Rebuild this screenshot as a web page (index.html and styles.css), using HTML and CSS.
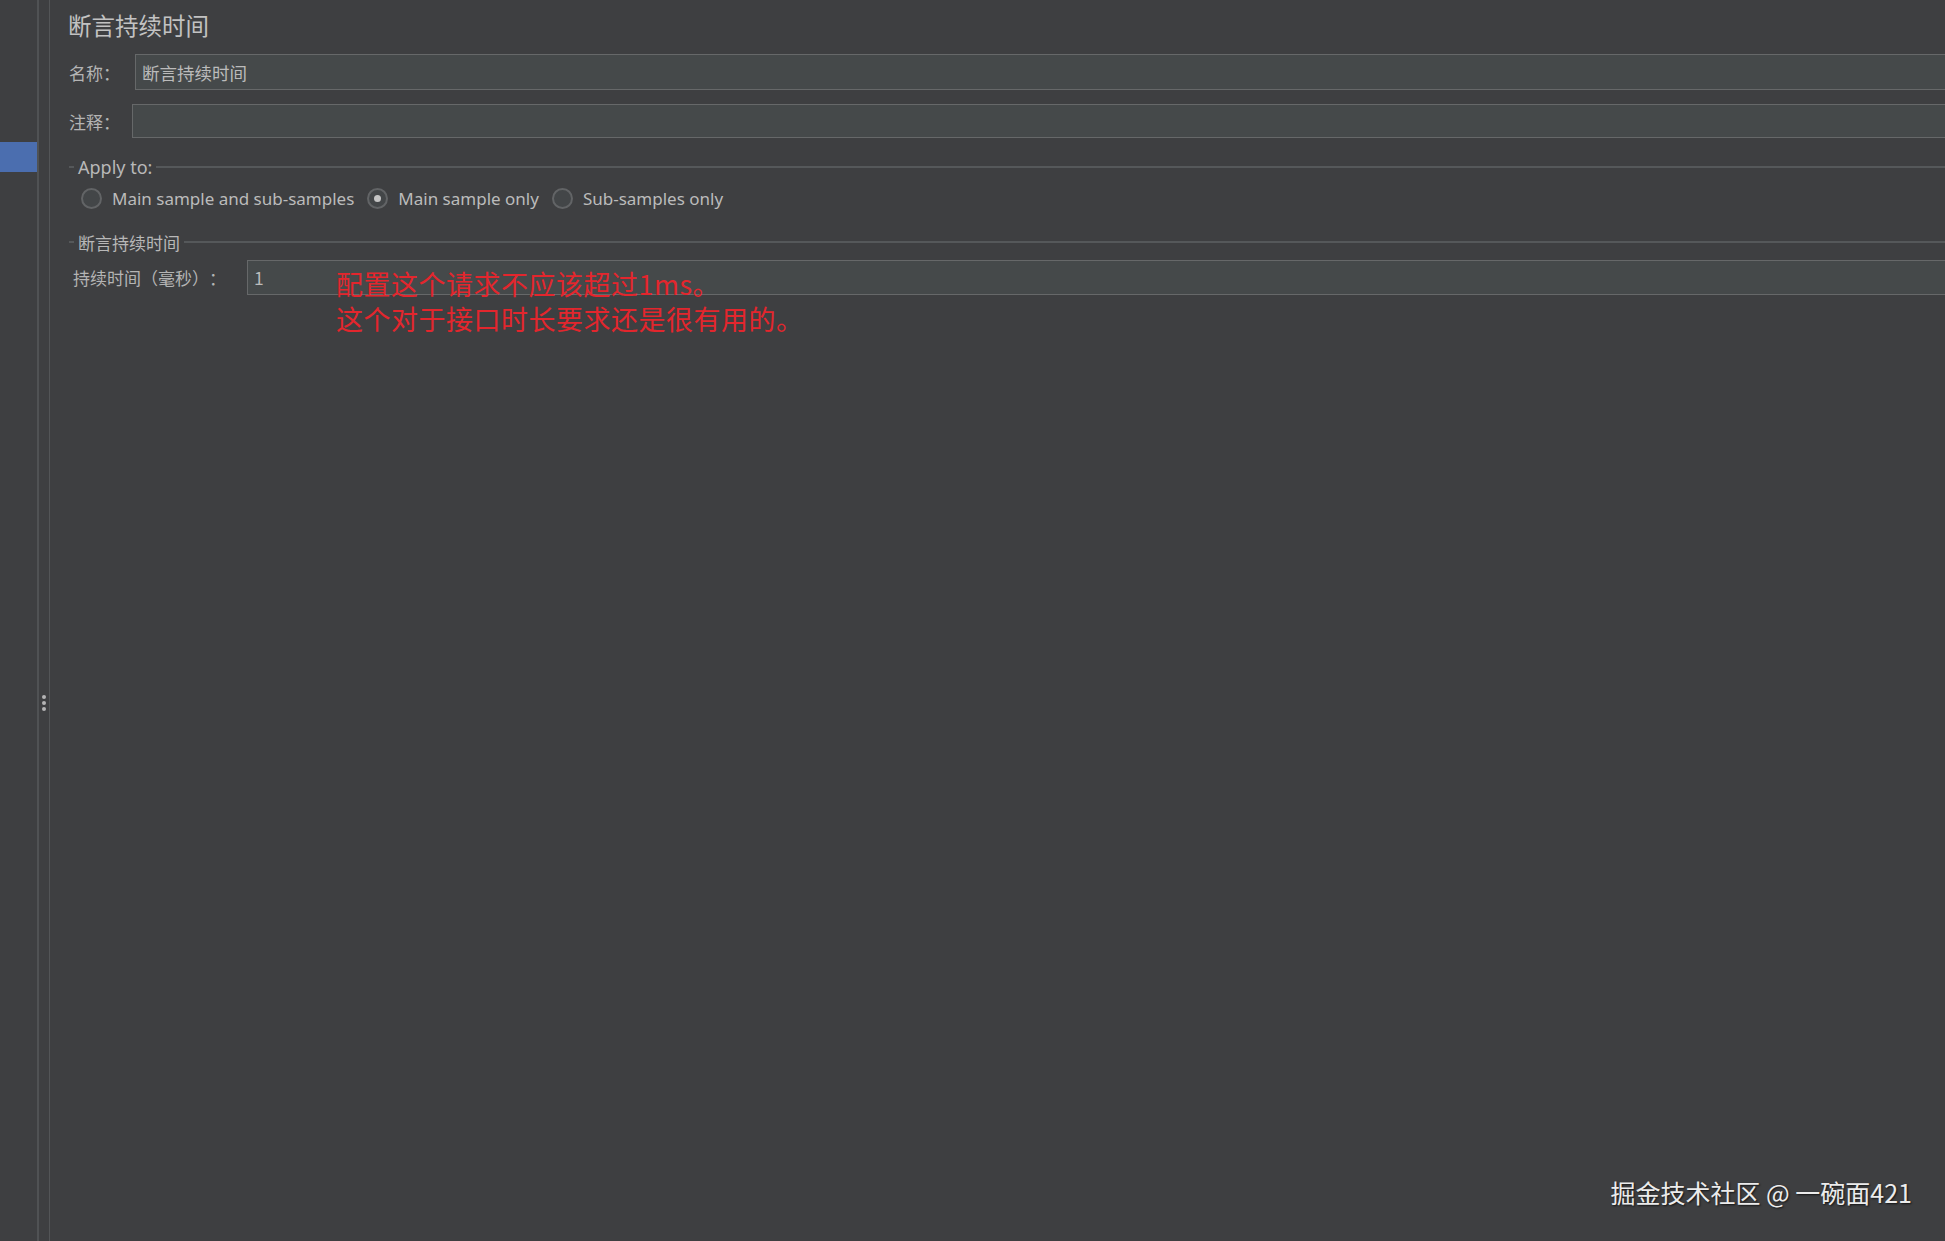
FILE: index.html
```html
<!DOCTYPE html>
<html lang="zh-CN">
<head>
    <meta charset="UTF-8">
    <meta name="viewport" content="width=device-width, initial-scale=1.0">
    <title>断言持续时间</title>
    <link rel="stylesheet" href="styles.css">
</head>
<body>
    <div class="app">
        <div class="tree">
            <div class="tree-selected"></div>
        </div>
        <div class="splitter">
            <span class="grip"></span>
            <span class="grip"></span>
            <span class="grip"></span>
        </div>
        <div class="panel">
            <h1 class="panel-title">断言持续时间</h1>

            <div class="field-row name-row">
                <label class="field-label">名称：</label>
                <div class="text-field">断言持续时间</div>
            </div>
            <div class="field-row comment-row">
                <label class="field-label">注释：</label>
                <div class="text-field"></div>
            </div>

            <div class="group-title apply-title"><span>Apply to:</span></div>
            <div class="radio-row">
                <label class="radio"><span class="radio-dot"></span>Main sample and sub-samples</label>
                <label class="radio checked"><span class="radio-dot"></span>Main sample only</label>
                <label class="radio"><span class="radio-dot"></span>Sub-samples only</label>
            </div>

            <div class="group-title duration-title"><span>断言持续时间</span></div>
            <div class="field-row duration-row">
                <label class="field-label">持续时间（毫秒）：</label>
                <div class="text-field">1</div>
            </div>
        </div>
    </div>

    <!-- annotation drawn over the screenshot -->
    <div class="note">配置这个请求不应该超过1ms。<br>这个对于接口时长要求还是很有用的。</div>
    <div class="watermark">掘金技术社区 @ 一碗面421</div>
</body>
</html>
```

FILE: styles.css
```css
html, body {
    margin: 0;
    padding: 0;
    height: 100%;
}

body {
    background-color: #3e3f41;
    color: #bbbbbb;
    font-family: "Noto Sans", "Noto Sans CJK SC", sans-serif;
    overflow: hidden;
    position: relative;
    text-spacing-trim: space-all;
}

.app {
    display: flex;
    height: 100vh;
}

.tree {
    width: 37px;
    flex-shrink: 0;
    border-right: 2px solid #505254;
    padding-top: 142px;
}

.tree-selected {
    height: 30px;
    background-color: #4b6eaf;
}

.splitter {
    width: 11px;
    flex-shrink: 0;
    border-right: 1px solid #535557;
    display: flex;
    flex-direction: column;
    align-items: center;
    justify-content: center;
    gap: 2px;
    padding-top: 164px;
    box-sizing: border-box;
}

.grip {
    width: 4px;
    height: 4px;
    border-radius: 50%;
    background-color: #b4b4b4;
}

.panel {
    flex: 1;
    overflow: hidden;
    padding-left: 5px;
}

.panel-title {
    margin: 0;
    height: 50px;
    line-height: 50px;
    padding-left: 13px;
    font-size: 23.5px;
    font-weight: normal;
    color: #c2c2c2;
    font-family: "Noto Sans CJK SC", sans-serif;
}

.field-row {
    display: flex;
    align-items: center;
}

.field-label {
    font-family: "Noto Sans CJK SC", sans-serif;
    font-size: 17px;
    color: #b4b4b4;
    flex-shrink: 0;
}

.text-field {
    flex: 1;
    margin-right: -10px;
    box-sizing: border-box;
    background-color: #45494a;
    border: 1px solid #666869;
    color: #bbbbbb;
    font-family: "Noto Sans CJK SC", sans-serif;
    font-size: 17.5px;
    padding-left: 6px;
    display: flex;
    align-items: center;
}

.name-row {
    margin-top: 4px;
    padding-left: 14px;
}

.name-row .field-label {
    width: 66px;
}

.name-row .text-field {
    height: 36px;
}

.comment-row {
    margin-top: 14px;
    padding-left: 14px;
}

.comment-row .field-label {
    width: 63px;
}

.comment-row .text-field {
    height: 34px;
}

.group-title {
    display: flex;
    align-items: center;
    height: 20px;
    padding-left: 14px;
    font-size: 18px;
    color: #b8b8b8;
}

.group-title::before {
    content: "";
    width: 5px;
    border-top: 2px solid #55585a;
    margin-right: 4px;
}

.group-title::after {
    content: "";
    flex: 1;
    border-top: 2px solid #55585a;
    margin-left: 4px;
}

.apply-title {
    margin-top: 19px;
}

.duration-title {
    margin-top: 21px;
    font-family: "Noto Sans CJK SC", sans-serif;
    font-size: 17px;
}

.radio-row {
    display: flex;
    align-items: center;
    height: 26px;
    margin-top: 8px;
    padding-left: 26px;
    gap: 13px;
}

.radio {
    display: flex;
    align-items: center;
    font-size: 17px;
    color: #bbbbbb;
}

.radio-dot {
    width: 17px;
    height: 17px;
    border: 2px solid #626466;
    border-radius: 50%;
    background-color: #434648;
    margin-right: 10px;
    display: flex;
    align-items: center;
    justify-content: center;
}

.radio.checked .radio-dot::after {
    content: "";
    width: 7px;
    height: 7px;
    border-radius: 50%;
    background-color: #c4c4c4;
}

.duration-row {
    margin-top: 8px;
    padding-left: 18px;
}

.duration-row .field-label {
    width: 174px;
}

.duration-row .text-field {
    height: 35px;
}

.note {
    position: absolute;
    left: 336px;
    top: 266px;
    color: #e3262d;
    font-family: "Noto Sans CJK SC", sans-serif;
    font-size: 27px;
    line-height: 35px;
    letter-spacing: 0.5px;
}

.watermark {
    position: absolute;
    right: 33px;
    bottom: 34px;
    color: #ececec;
    font-family: "Noto Sans CJK SC", sans-serif;
    font-size: 25px;
    line-height: 30px;
    text-shadow: 1px 1px 2px rgba(0, 0, 0, 0.7);
}
```
